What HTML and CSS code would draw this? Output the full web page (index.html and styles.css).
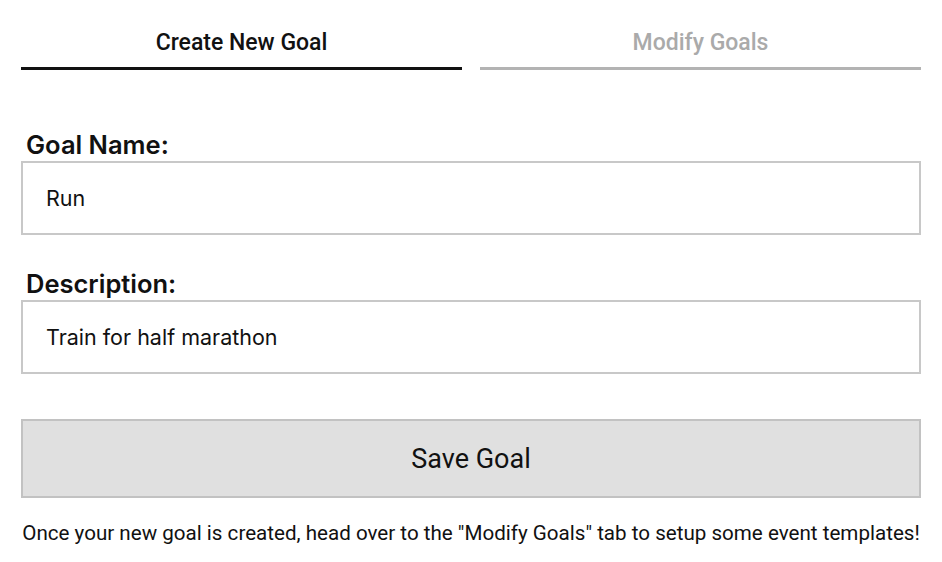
FILE: index.html
```html
<!DOCTYPE html>
<html>
<head>
<meta charset="utf-8">
<link rel="stylesheet" href="styles.css">
</head>
<body>
<div class="page">
  <div class="tabs">
    <div class="tab active">Create New Goal</div>
    <div class="tab">Modify Goals</div>
  </div>
  <form class="form">
    <div class="field">
      <label class="label">Goal Name:</label>
      <div class="input">Run</div>
    </div>
    <div class="field">
      <label class="label">Description:</label>
      <div class="input">Train for half marathon</div>
    </div>
    <div class="button">Save Goal</div>
  </form>
  <p class="note">Once your new goal is created, head over to the "Modify Goals" tab to setup some event templates!</p>
</div>
</body>
</html>
```
FILE: styles.css
```css
html, body { margin: 0; padding: 0; background: #fff; }
.page { padding: 0 21px; font-family: Inter, "Noto Sans", sans-serif; color: #111; }
.tabs { display: flex; gap: 18px; padding-top: 28px; }
.tab {
  flex: 1; text-align: center; font-family: Roboto, sans-serif; font-weight: 500;
  font-size: 23px; line-height: 29px; padding-bottom: 10px; color: #aaaaaa;
  border-bottom: 3px solid #b3b3b3;
}
.tab.active { color: #111; border-bottom-color: #111; }
.form { margin-top: 59px; display: flex; flex-direction: column; }
.field { display: flex; flex-direction: column; margin-bottom: 33px; }
.label { font-size: 25.5px; font-weight: 600; line-height: 30px; padding-left: 5px; margin-bottom: 1px; margin-top: 1px; }
.input {
  border: 2px solid #c8c8c8; height: 70px; box-sizing: content-box;
  display: flex; align-items: center; padding-left: 23px; font-size: 21.5px;
}
.button {
  margin-top: 12px; background: #e0e0e0; border: 2px solid #c2c2c2; height: 75px;
  display: flex; align-items: center; justify-content: center;
  font-family: Roboto, sans-serif; font-size: 27px;
}
.note { margin: 23px -4px 0; text-align: center; font-family: Roboto, sans-serif; font-size: 20.6px; white-space: nowrap; }
```
